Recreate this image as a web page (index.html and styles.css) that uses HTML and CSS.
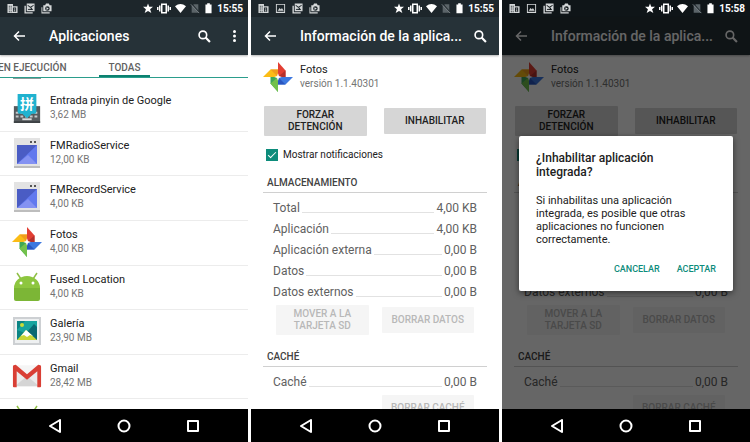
FILE: index.html
```html
<!DOCTYPE html>
<html lang="es">
  <head>
    <meta charset="utf-8" />
    <title>Aplicaciones</title>
    <meta name="viewport" content="width=device-width,initial-scale=1" />
    <link rel="stylesheet" href="styles.css">
  </head>
  <body>
    <!-- Shared icons -->
    <svg class="sprite" aria-hidden="true">
      <symbol id="i-building" viewBox="0 0 24 24"><path fill="currentColor" fill-rule="evenodd" d="M1 2h12v5h10v15H1zM4 6h2v2H4zM8 6h2v2H8zM4 10h2v2H4zM8 10h2v2H8zM4 14h2v2H4zM8 14h2v2H8zM4 18h2v2H4zM8 18h2v2H8zM13 10v9h7v-9zM15 12h3v2h-3zM15 16h3v2h-3z"/></symbol>
      <symbol id="i-image" viewBox="0 0 24 24"><path fill="currentColor" fill-rule="evenodd" d="M2 2h20v20H2zM4 4v15h16V4zM6 17l4-6 3 3 2-3 4 6z"/></symbol>
      <symbol id="i-gallery" viewBox="0 0 24 24"><path fill="currentColor" fill-rule="evenodd" d="M6 1h17v17H6zM8 4v2l6 5 7-5V4l-7 4zM8 15h12l-4-5-3 4-2-2zM1 6h3v14h15v3H1z"/></symbol>
      <symbol id="i-camera" viewBox="0 0 24 24"><path fill="currentColor" fill-rule="evenodd" d="M5 5h4l2-4h6l2 4h4v13H5zM14 7a5 5 0 1 0 0 10a5 5 0 0 0 0-10zM12 9l5 3-5 3zM1 9h2v11h16v3H1z"/></symbol>
      <symbol id="i-star" viewBox="0 0 24 24"><path fill="currentColor" d="M12 0l3 8h9l-7 6 3 9-8-5-8 5 3-9-7-6h9z"/></symbol>
      <symbol id="i-vibrate" viewBox="0 0 28 22"><path fill="currentColor" fill-rule="evenodd" d="M8 1h12v20H8zM11 4v14h6V4zM4 5h3v12H4zM0 8h3v6H0zM21 5h3v12h-3zM25 8h3v6h-3z"/></symbol>
      <symbol id="i-wifi" viewBox="0 0 24 22"><path fill="currentColor" d="M0 6Q12-4 24 6L12 21z"/></symbol>
      <symbol id="i-nosim" viewBox="0 0 24 24"><path fill="#5b6469" d="M9 2h11v20H4V7z"/><path stroke="#1d262b" stroke-width="3" d="M5 2l18 21"/><path stroke="#8b9397" stroke-width="2" d="M2 2l20 21"/></symbol>
      <symbol id="i-battery" viewBox="0 0 16 24"><path fill="currentColor" d="M5 0h6v3h4v20H1V3h4z"/></symbol>
      <symbol id="i-back" viewBox="0 0 24 24"><path fill="none" stroke="currentColor" stroke-width="3" d="M24 12H4M12 3l-9 9 9 9"/></symbol>
      <symbol id="i-search" viewBox="0 0 24 24"><g fill="none" stroke="currentColor" stroke-width="3"><circle cx="9" cy="9" r="7"/><path stroke-width="4" d="M14 14l8 8"/></g></symbol>
      <symbol id="i-more" viewBox="0 0 6 24"><g fill="currentColor"><circle cx="3" cy="3" r="3"/><circle cx="3" cy="12" r="3"/><circle cx="3" cy="21" r="3"/></g></symbol>
      <symbol id="i-nav-back" viewBox="0 0 14 14"><path fill="none" stroke="currentColor" stroke-width="2" stroke-linejoin="round" d="M12 1v12L2 7z"/></symbol>
      <symbol id="i-nav-home" viewBox="0 0 14 14"><circle cx="7" cy="7" r="5.5" fill="none" stroke="currentColor" stroke-width="2"/></symbol>
      <symbol id="i-nav-recent" viewBox="0 0 14 14"><path fill="none" stroke="currentColor" stroke-width="2" stroke-linejoin="round" d="M2 2h10v10H2z"/></symbol>
      <symbol id="app-photos" viewBox="0 0 32 32">
        <path fill="#e23f33" d="M16 0l8 9v7h-8z"/><path fill="#b5302c" d="M16 16l8-7v7z"/>
        <path fill="#fbbc16" d="M0 16l8-8h8v8z"/><path fill="#f19d1c" d="M8 8h8v8z"/>
        <path fill="#3fa757" d="M16 16v16l-8-9v-7z"/><path fill="#72c14c" d="M16 16v16l-8-9z"/>
        <path fill="#3d78e0" d="M16 16h16l-8 8h-8z"/><path fill="#2a56c0" d="M16 16l8 8h-8z"/>
        <path fill="#fff" d="M16 12l1 3 3 1-3 1-1 3-1-3-3-1 3-1z"/>
      </symbol>
      <symbol id="app-pinyin" viewBox="0 0 30 32">
        <path fill="#565b5e" d="M1 14h28v18H1z"/><path fill="#3d4245" d="M1 30h28v2H1z"/>
        <path stroke="#c4c8ca" stroke-width="2" stroke-dasharray="3 2" d="M3 21h24M3 25h24"/><path stroke="#d7dadb" stroke-width="2" d="M10 28h10"/>
        <path fill="#20b2cf" d="M5 1h20v19q0 2-2 2h-3l-5 5-5-5H7q-2 0-2-2z"/>
        <text class="glyph" x="15" y="17" text-anchor="middle">拼</text>
      </symbol>
      <symbol id="app-window" viewBox="0 0 26 30">
        <path fill="#e3e3e3" d="M0 0h26v30H0z"/><path fill="#bdbdbd" d="M0 28h26v2H0z"/>
        <path fill="#6279ee" d="M3 7h20v19H3z"/><path fill="#4a5cc4" d="M3 7h20L3 26z"/><path fill="#8492f2" d="M3 26l11-9 9 9z"/>
        <path fill="#555" d="M16 3h2v2h-2zM20 3h2v2h-2z"/>
      </symbol>
      <symbol id="app-android" viewBox="0 0 28 30">
        <path stroke="#8fbf45" stroke-width="1.5" d="M4 1l4 6M24 1l-4 6"/>
        <path fill="#8dc63f" d="M1 16a13 12 0 0 1 26 0z"/><path fill="#7cb636" d="M1 16h26v11q0 2-2 2H3q-2 0-2-2z"/>
        <circle cx="8" cy="11" r="1.5" fill="#fff"/><circle cx="20" cy="11" r="1.5" fill="#fff"/>
      </symbol>
      <symbol id="app-gallery" viewBox="0 0 30 30">
        <path fill="#cdd0d3" d="M1 1h28v28H1z"/><path fill="#eef0f1" d="M3 3h24v24H3z"/><path fill="#0b8484" d="M5 5h20v19H5z"/>
        <path fill="#18a39e" d="M5 14l8-9h12v8l-9 5z"/><path fill="#0a6872" d="M16 15l6-7 3 3v13H11z"/><path fill="#c9d637" d="M5 24l9-10 11 10z"/><path fill="#fff" d="M9 20l5-6 7 6-3-1-3 2-3-2z"/><circle cx="10" cy="9" r="2" fill="#c9dc37"/>
      </symbol>
      <symbol id="app-gmail" viewBox="0 0 32 26">
        <path fill="#ebebeb" d="M3 2h26v22H3z"/><path fill="#d5d5d5" d="M3 24l13-11 13 11z"/><path fill="#f5f5f5" d="M4 2h24L16 12z"/>
        <path fill="#d93f35" d="M1 3q0-2 3-2l12 10L28 1q3 0 3 2v21q0 1-1 1h-3V8L16 17 5 8v17H2q-1 0-1-1z"/>
      </symbol>
    </svg>

    <div class="screens">
      <!-- App list -->
      <section class="phone">
        <div class="status">
          <svg><use href="#i-building"/></svg>
          <svg><use href="#i-gallery"/></svg>
          <svg><use href="#i-camera"/></svg>
          <span class="status__system">
            <svg><use href="#i-star"/></svg>
            <svg class="status__vibrate"><use href="#i-vibrate"/></svg>
            <svg class="status__wifi"><use href="#i-wifi"/></svg>
            <svg><use href="#i-nosim"/></svg>
            <svg class="status__battery"><use href="#i-battery"/></svg>
            <span>15:55</span>
          </span>
        </div>
        <header class="bar">
          <button class="icon-btn" aria-label="Atrás"><svg><use href="#i-back"/></svg></button>
          <h1 class="bar__title">Aplicaciones</h1>
          <button class="icon-btn icon-btn--search" aria-label="Buscar"><svg><use href="#i-search"/></svg></button>
          <button class="icon-btn icon-btn--more" aria-label="Más opciones"><svg><use href="#i-more"/></svg></button>
        </header>
        <nav class="tabs">
          <a href="#" class="tabs__link">EN EJECUCIÓN</a>
          <a href="#" class="tabs__link tabs__link--active">TODAS</a>
        </nav>
        <main class="screen">
          <!-- Bottom edge of the row scrolled under the tabs -->
          <div class="peek"></div>
          <ul class="apps">
            <li class="app"><svg class="app__icon"><use href="#app-pinyin"/></svg><div><h2>Entrada pinyin de Google</h2><p>3,62 MB</p></div></li>
            <li class="app"><svg class="app__icon"><use href="#app-window"/></svg><div><h2>FMRadioService</h2><p>12,00 KB</p></div></li>
            <li class="app"><svg class="app__icon"><use href="#app-window"/></svg><div><h2>FMRecordService</h2><p>4,00 KB</p></div></li>
            <li class="app"><svg class="app__icon"><use href="#app-photos"/></svg><div><h2>Fotos</h2><p>4,00 KB</p></div></li>
            <li class="app"><svg class="app__icon"><use href="#app-android"/></svg><div><h2>Fused Location</h2><p>4,00 KB</p></div></li>
            <li class="app"><svg class="app__icon"><use href="#app-gallery"/></svg><div><h2>Galería</h2><p>23,90 MB</p></div></li>
            <li class="app"><svg class="app__icon"><use href="#app-gmail"/></svg><div><h2>Gmail</h2><p>28,42 MB</p></div></li>
            <li class="app"><svg class="app__icon"><use href="#app-android"/></svg></li>
          </ul>
        </main>
        <nav class="keys">
          <button aria-label="Atrás"><svg><use href="#i-nav-back"/></svg></button>
          <button aria-label="Inicio"><svg><use href="#i-nav-home"/></svg></button>
          <button aria-label="Recientes"><svg><use href="#i-nav-recent"/></svg></button>
        </nav>
      </section>

      <!-- App info -->
      <section class="phone">
        <div class="status">
          <svg><use href="#i-building"/></svg>
          <svg><use href="#i-image"/></svg>
          <svg><use href="#i-gallery"/></svg>
          <svg><use href="#i-camera"/></svg>
          <span class="status__system">
            <svg><use href="#i-star"/></svg>
            <svg class="status__vibrate"><use href="#i-vibrate"/></svg>
            <svg class="status__wifi"><use href="#i-wifi"/></svg>
            <svg><use href="#i-nosim"/></svg>
            <svg class="status__battery"><use href="#i-battery"/></svg>
            <span>15:55</span>
          </span>
        </div>
        <header class="bar">
          <button class="icon-btn" aria-label="Atrás"><svg><use href="#i-back"/></svg></button>
          <h1 class="bar__title">Información de la aplica...</h1>
          <button class="icon-btn icon-btn--search" aria-label="Buscar"><svg><use href="#i-search"/></svg></button>
        </header>
        <main class="screen info">
          <div class="info__head"><svg class="app__icon"><use href="#app-photos"/></svg><div><h2>Fotos</h2><p>versión 1.1.40301</p></div></div>
          <div class="actions">
            <button class="btn">FORZAR DETENCIÓN</button>
            <button class="btn">INHABILITAR</button>
          </div>
          <label class="check"><input type="checkbox" checked>Mostrar notificaciones</label>
          <h3 class="info__title">ALMACENAMIENTO</h3>
          <dl class="sizes">
            <div><dt>Total</dt><dd>4,00 KB</dd></div>
            <div><dt>Aplicación</dt><dd>4,00 KB</dd></div>
            <div><dt>Aplicación externa</dt><dd>0,00 B</dd></div>
            <div><dt>Datos</dt><dd>0,00 B</dd></div>
            <div><dt>Datos externos</dt><dd>0,00 B</dd></div>
          </dl>
          <div class="actions actions--inner">
            <button class="btn" disabled>MOVER A LA TARJETA SD</button>
            <button class="btn" disabled>BORRAR DATOS</button>
          </div>
          <h3 class="info__title">CACHÉ</h3>
          <dl class="sizes">
            <div><dt>Caché</dt><dd>0,00 B</dd></div>
          </dl>
          <div class="actions actions--inner">
            <button class="btn btn--second" disabled>BORRAR CACHÉ</button>
          </div>
        </main>
        <nav class="keys">
          <button aria-label="Atrás"><svg><use href="#i-nav-back"/></svg></button>
          <button aria-label="Inicio"><svg><use href="#i-nav-home"/></svg></button>
          <button aria-label="Recientes"><svg><use href="#i-nav-recent"/></svg></button>
        </nav>
      </section>

      <!-- App info with the confirmation dialog -->
      <section class="phone phone--dimmed">
        <div class="status">
          <svg><use href="#i-building"/></svg>
          <svg><use href="#i-image"/></svg>
          <svg><use href="#i-gallery"/></svg>
          <svg><use href="#i-camera"/></svg>
          <span class="status__system">
            <svg><use href="#i-star"/></svg>
            <svg class="status__vibrate"><use href="#i-vibrate"/></svg>
            <svg class="status__wifi"><use href="#i-wifi"/></svg>
            <svg><use href="#i-nosim"/></svg>
            <svg class="status__battery"><use href="#i-battery"/></svg>
            <span>15:58</span>
          </span>
        </div>
        <header class="bar">
          <button class="icon-btn" aria-label="Atrás"><svg><use href="#i-back"/></svg></button>
          <h1 class="bar__title">Información de la aplica...</h1>
          <button class="icon-btn icon-btn--search" aria-label="Buscar"><svg><use href="#i-search"/></svg></button>
        </header>
        <main class="screen info">
          <div class="info__head"><svg class="app__icon"><use href="#app-photos"/></svg><div><h2>Fotos</h2><p>versión 1.1.40301</p></div></div>
          <div class="actions">
            <button class="btn">FORZAR DETENCIÓN</button>
            <button class="btn">INHABILITAR</button>
          </div>
          <label class="check"><input type="checkbox" checked>Mostrar notificaciones</label>
          <h3 class="info__title">ALMACENAMIENTO</h3>
          <dl class="sizes">
            <div><dt>Total</dt><dd>4,00 KB</dd></div>
            <div><dt>Aplicación</dt><dd>4,00 KB</dd></div>
            <div><dt>Aplicación externa</dt><dd>0,00 B</dd></div>
            <div><dt>Datos</dt><dd>0,00 B</dd></div>
            <div><dt>Datos externos</dt><dd>0,00 B</dd></div>
          </dl>
          <div class="actions actions--inner">
            <button class="btn" disabled>MOVER A LA TARJETA SD</button>
            <button class="btn" disabled>BORRAR DATOS</button>
          </div>
          <h3 class="info__title">CACHÉ</h3>
          <dl class="sizes">
            <div><dt>Caché</dt><dd>0,00 B</dd></div>
          </dl>
          <div class="actions actions--inner">
            <button class="btn btn--second" disabled>BORRAR CACHÉ</button>
          </div>
        </main>
        <nav class="keys">
          <button aria-label="Atrás"><svg><use href="#i-nav-back"/></svg></button>
          <button aria-label="Inicio"><svg><use href="#i-nav-home"/></svg></button>
          <button aria-label="Recientes"><svg><use href="#i-nav-recent"/></svg></button>
        </nav>
        <div class="overlay">
          <div class="dialog" role="dialog" aria-labelledby="dialog-title">
            <h2 id="dialog-title">¿Inhabilitar aplicación integrada?</h2>
            <p>Si inhabilitas una aplicación integrada, es posible que otras aplicaciones no funcionen correctamente.</p>
            <div class="dialog__actions">
              <button>CANCELAR</button>
              <button>ACEPTAR</button>
            </div>
          </div>
        </div>
      </section>
    </div>
  </body>
</html>
```
FILE: styles.css
```css
/* Base */
*, *:before, *:after { box-sizing: border-box; }
body {
  margin: 0;
  font-family: Roboto, "Noto Sans CJK SC", sans-serif;
  font-size: 12px;
  background-color: #fff;
  color: #212121;
}
h1, h2, h3, p, ul, dl, dd { margin: 0; padding: 0; font-weight: 400; }
button {
  padding: 0;
  border: 0;
  background: none;
  color: inherit;
  font-family: inherit;
}
svg { display: block; flex: none; }
.sprite { position: absolute; width: 0; height: 0; }
.glyph { fill: #fff; font-family: "Noto Sans CJK SC", sans-serif; font-size: 15px; font-weight: 700; }

/* Three phones side by side */
.screens {
  display: grid;
  grid-template-columns: repeat(3, 1fr);
  gap: 3px;
  height: 100vh;
}
.phone {
  position: relative;
  display: flex;
  flex-direction: column;
  min-width: 0;
  min-height: 0;
  overflow: hidden;
}

/* Status bar */
.status {
  display: flex;
  flex: none;
  align-items: center;
  gap: 6px;
  height: 17px;
  padding: 0 5px 0 7px;
  background-color: #1d262b;
  color: #fff;
}
.phone--dimmed .status { background-color: #0f1518; }
.status svg { width: 10px; height: 11px; }
.status > svg { width: 11px; color: #d5d8d9; }
.status__system {
  display: flex;
  align-items: center;
  gap: 4px;
  margin-left: auto;
  font-size: 10px;
  font-weight: 700;
}
.status .status__vibrate { width: 14px; }
.status .status__wifi { width: 11px; }
.status .status__battery { width: 7px; margin: 0 1px; }

/* App bar */
.bar {
  display: flex;
  flex: none;
  align-items: center;
  height: 38px;
  padding: 0 12px 0 13px;
  background-color: #263238;
  box-shadow: 0 1px 2px rgba(0, 0, 0, 0.3);
  color: #fff;
}
.bar__title {
  flex: 1;
  padding-left: 24px;
  font-size: 14px;
  font-weight: 500;
  white-space: nowrap;
}
.icon-btn svg { width: 12px; height: 12px; }
.icon-btn--search svg { width: 13px; height: 13px; }
.icon-btn--more { padding-left: 22px; }
.icon-btn--more svg { width: 3px; }

/* Tabs */
.tabs {
  display: flex;
  flex: none;
  height: 23px;
  border-bottom: 1px solid #2b9d8c;
}
.tabs__link {
  height: 22px;
  margin-left: -2px;
  color: #616161;
  font-size: 10px;
  font-weight: 500;
  line-height: 25px;
  text-decoration: none;
}
.tabs__link--active {
  margin-left: 32px;
  padding: 0 10px;
  border-bottom: 2px solid #0c8170;
}

/* App list */
.screen { flex: 1; min-height: 0; overflow: hidden; }
.peek {
  width: 28px;
  height: 1px;
  margin-left: 13px;
  background-color: #8a9a98;
}
.apps {
  display: grid;
  grid-auto-rows: 1fr;
  height: 357px;
  margin-top: 8px;
  list-style: none;
}
.app {
  display: flex;
  gap: 8px;
  padding: 6px 12px;
  border-bottom: 1px solid #ececec;
}
.app__icon { width: 30px; height: 30px; }
.app h2, .info__head h2 { font-size: 11px; line-height: 16px; }
.app p, .info__head p { color: #757575; font-size: 10px; line-height: 12px; }

/* App info */
.info { padding: 7px 12px 0; }
.info__head { display: flex; gap: 7px; margin-bottom: 14px; }
.actions {
  display: grid;
  grid-template-columns: 1fr 1fr;
  align-items: center;
  gap: 17px;
  padding: 0 1px;
}
.actions--inner {
  gap: 13px;
  margin-top: 3px;
  padding: 0 13px;
}
.btn {
  min-height: 26px;
  padding: 3px 8px;
  border-radius: 1px;
  background-color: #d6d6d6;
  color: #212121;
  font-size: 10px;
  font-weight: 500;
  line-height: 12px;
}
.btn--second { grid-column: 2; }
.btn:disabled { background-color: #f5f5f5; color: #b8b8b8; }
.check {
  display: flex;
  align-items: center;
  gap: 5px;
  margin-top: 12px;
  padding-left: 3px;
  font-size: 10px;
  line-height: 13px;
}
.check input {
  appearance: none;
  display: grid;
  place-items: center;
  width: 12px;
  height: 12px;
  margin: 0;
  border: 1px solid #0d8c7b;
}
.check input:checked { background-color: #0d8c7b; }
.check input:checked:after {
  content: "";
  width: 8px;
  height: 4px;
  margin-bottom: 2px;
  border: solid #fff;
  border-width: 0 0 1px 1px;
  transform: rotate(-45deg);
}
.info__title {
  margin-top: 15px;
  padding: 0 4px 2px;
  border-bottom: 1px solid #d0d0d0;
  color: #424242;
  font-size: 10px;
  font-weight: 500;
  line-height: 14px;
}
.sizes { padding: 4px 10px 0; }
.sizes div {
  display: flex;
  align-items: center;
  gap: 2px;
  height: 21px;
  color: #616161;
  font-size: 12px;
}
.sizes div:after {
  content: "";
  flex: 1;
  align-self: flex-end;
  margin-bottom: 5px;
  border-bottom: 1px solid #e2e2e2;
}
.sizes dd { order: 1; }

/* Navigation keys */
.keys {
  display: flex;
  flex: none;
  justify-content: center;
  gap: 55px;
  height: 33px;
  background-color: #000;
  color: #fff;
}
.keys svg { width: 14px; height: 14px; }

/* Dialog */
.overlay {
  position: absolute;
  inset: 17px 0 33px;
  display: flex;
  align-items: center;
  padding: 0 17px;
  background-color: rgba(0, 0, 0, 0.6);
}
.dialog {
  width: 100%;
  padding: 15px 17px 16px;
  border-radius: 2px;
  background-color: #fff;
  box-shadow: 0 2px 6px rgba(0, 0, 0, 0.5);
}
.dialog h2 { padding-right: 32px; font-size: 12px; font-weight: 500; line-height: 14px; }
.dialog p { margin-top: 15px; font-size: 11px; line-height: 13px; }
.dialog__actions { display: flex; justify-content: flex-end; gap: 17px; margin-top: 17px; }
.dialog__actions button { color: #0d8c7b; font-size: 9px; font-weight: 500; line-height: 12px; }
```
